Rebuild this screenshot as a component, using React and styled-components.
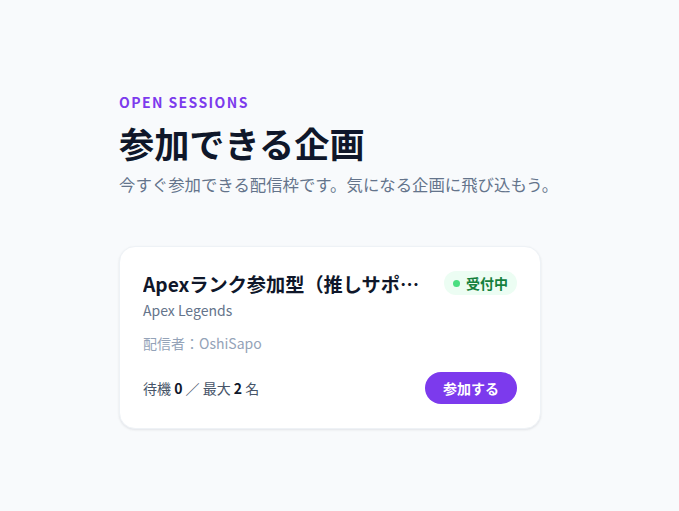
import React from "react";
import styled, { createGlobalStyle } from "styled-components";

const Global = createGlobalStyle`
  html, body { margin: 0; padding: 0; background: #f8fafc; }
  body { font-family: "Noto Sans CJK JP", "Noto Sans", sans-serif; color: #0f172a; }
  * { box-sizing: border-box; }
`;

const Page = styled.main`
  min-height: 511px;
  padding: 92px 119px 40px;
`;

const Header = styled.header`
  display: flex;
  flex-direction: column;
`;

const Eyebrow = styled.p`
  margin: 0;
  font-size: 14px;
  line-height: 20px;
  font-weight: 700;
  letter-spacing: 0.1em;
  color: #7c3aed;
`;

const Title = styled.h1`
  margin: 7px 0 0;
  font-size: 35.2px;
  line-height: 48px;
  font-weight: 700;
  color: #0f172a;
`;

const Lead = styled.p`
  margin: 5px 0 0;
  font-size: 16.4px;
  line-height: 24px;
  color: #64748b;
`;

const Grid = styled.section`
  margin-top: 50px;
  display: grid;
  grid-template-columns: 422px;
`;

const Card = styled.article`
  background: #ffffff;
  border: 1px solid #eef2f6;
  border-radius: 16px;
  box-shadow: 0 1px 3px rgba(15, 23, 42, 0.06), 0 1px 2px rgba(15, 23, 42, 0.04);
  padding: 23px 23px 24px;
  display: flex;
  flex-direction: column;
`;

const CardHead = styled.div`
  display: flex;
  align-items: flex-start;
  justify-content: space-between;
  gap: 16px;
`;

const CardTitle = styled.h2`
  margin: 0;
  flex: 1;
  min-width: 0;
  font-size: 19.2px;
  line-height: 28px;
  font-weight: 700;
  color: #0f172a;
  white-space: nowrap;
  overflow: hidden;
  text-overflow: ellipsis;
`;

const Badge = styled.span`
  flex: none;
  margin-top: 1px;
  display: inline-flex;
  align-items: center;
  gap: 6px;
  height: 24px;
  padding: 0 9px;
  border-radius: 999px;
  background: #ecfdf3;
  color: #15803d;
  font-size: 14px;
  font-weight: 700;
  &::before {
    content: "";
    width: 7px;
    height: 7px;
    border-radius: 50%;
    background: #4ade80;
  }
`;

const Meta = styled.p`
  margin: ${(p) => p.$mt}px 0 0;
  font-size: 14px;
  line-height: 20px;
  color: ${(p) => p.$color};
`;

const Footer = styled.div`
  margin-top: 19px;
  display: flex;
  align-items: center;
  justify-content: space-between;
`;

const Capacity = styled.span`
  font-size: 14px;
  color: #475569;
  b { color: #0f172a; font-weight: 700; }
`;

const JoinButton = styled.button`
  height: 32px;
  padding: 0 18px;
  border: none;
  border-radius: 999px;
  background: #7c3aed;
  color: #ffffff;
  font-family: inherit;
  font-size: 14px;
  font-weight: 700;
  cursor: pointer;
`;

export default function App() {
  return (
    <>
      <Global />
      <Page>
        <Header>
          <Eyebrow>OPEN SESSIONS</Eyebrow>
          <Title>参加できる企画</Title>
          <Lead>今すぐ参加できる配信枠です。気になる企画に飛び込もう。</Lead>
        </Header>
        <Grid>
          <Card>
            <CardHead>
              <CardTitle>Apexランク参加型（推しサポート）ゆるっと参加募集</CardTitle>
              <Badge>受付中</Badge>
            </CardHead>
            <Meta $mt={2} $color="#64748b">Apex Legends</Meta>
            <Meta $mt={13} $color="#94a3b8">配信者：OshiSapo</Meta>
            <Footer>
              <Capacity>
                待機 <b>0</b> ／ 最大 <b>2</b> 名
              </Capacity>
              <JoinButton>参加する</JoinButton>
            </Footer>
          </Card>
        </Grid>
      </Page>
    </>
  );
}
